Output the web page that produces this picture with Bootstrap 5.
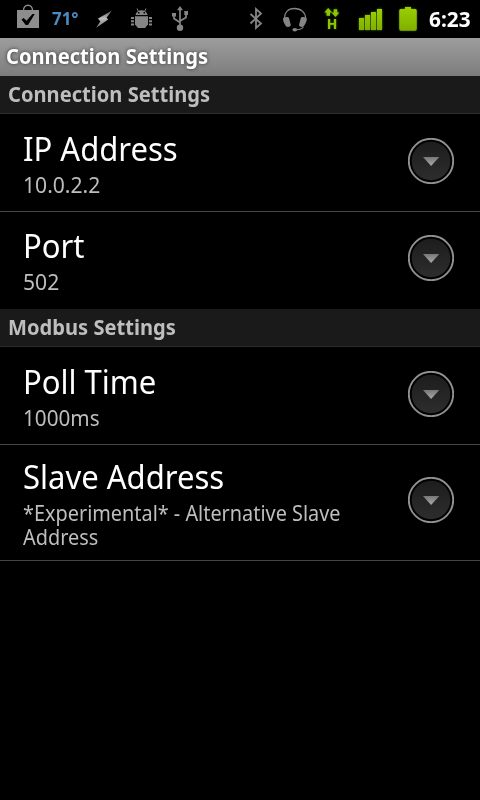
<!DOCTYPE html>
<html lang="en">
<head>
<meta charset="utf-8">
<meta name="viewport" content="width=device-width, initial-scale=1">
<title>Connection Settings</title>
<link rel="stylesheet" href="https://cdn.jsdelivr.net/npm/bootstrap@5.3.0/dist/css/bootstrap.min.css">
<style>
  body { background: #000; font-family: "Noto Sans", "Open Sans", sans-serif; overflow: hidden; }
  .screen { width: 480px; height: 800px; }
  .status-bar { height: 38px; padding-right: 9px; padding-left: 15px; }
  .status-bar svg { display: block; flex: none; }
  .temp { color: #4a8cc2; font-size: 18px; font-weight: 700; line-height: 37px; width: 28px; white-space: nowrap; margin-left: 11px; margin-right: 14px; }
  .droid-icon { margin-left: 15px; }
  .usb-icon { margin-left: 15px; }
  .clock { color: #fff; font-size: 21px; font-weight: 700; line-height: 38px; width: 42px; margin-left: 11px; white-space: nowrap; }
  .narrow { display: inline-block; transform-origin: 0 50%; transform: scaleX(.94); white-space: nowrap; }
  .title-bar .narrow, .section-head .narrow { transform: scaleX(.958); }
  .clock .narrow { transform: scaleX(.99); }
  .pref-summary .narrow { transform: scaleX(.946); }
  .pref-summary .digits { transform: scaleX(1.005); }
  .pref-summary .digits-unit { transform: scaleX(.985); }
  .title-bar { height: 38px; padding-left: 6px; font-size: 21px; line-height: 37px; font-weight: 700; color: #fff; background: linear-gradient(#9d9d9d, #7d7d7d); text-shadow: 0 0 4px #333; }
  .section-head { height: 38px; padding-left: 8px; font-size: 21px; line-height: 36px; font-weight: 700; color: #bebebe; background: #1a1a1a; border-bottom: 1px solid #2d2d2d; }
  .pref { height: 97px; padding: 15px 26px 0 23px; }
  .pref.ruled { height: 98px; padding-top: 16px; border-bottom: 1px solid #444; }
  .pref.ruled.tall { height: 116px; padding-top: 13px; }
  .pref-title { font-size: 33px; line-height: 38px; color: #fff; }
  .pref-summary { font-size: 21px; line-height: 24px; color: #bebebe; margin-top: 5px; }
  .more { width: 46px; height: 46px; margin-top: 8px; flex: none; }
  .tall .more { margin-top: 19px; }
</style>
<script src="https://cdn.jsdelivr.net/npm/bootstrap@5.3.0/dist/js/bootstrap.bundle.min.js"></script>
</head>
<body>
<svg width="0" height="0" class="position-absolute" aria-hidden="true">
  <defs>
    <linearGradient id="disc" x2="0" y2="1"><stop stop-color="#1d1d1d"/><stop offset="1" stop-color="#2d2d2d"/></linearGradient>
    <linearGradient id="arrow" x2="0" y2="1"><stop stop-color="#777"/><stop offset="1" stop-color="#aaa"/></linearGradient>
    <linearGradient id="green" x2="0" y2="1"><stop stop-color="#9bd000"/><stop offset="1" stop-color="#7fb000"/></linearGradient>
    <linearGradient id="bolt" x2="0" y2="1"><stop stop-color="#555"/><stop offset=".45" stop-color="#bbb"/><stop offset="1" stop-color="#777"/></linearGradient>
    <filter id="glow" x="-30%" y="-30%" width="160%" height="160%"><feGaussianBlur stdDeviation="1.3"/></filter>
    <symbol id="more" viewBox="0 0 46 46">
      <circle cx="23" cy="23" r="22.2" fill="#000" stroke="#919191" stroke-width="1.9"/>
      <circle cx="23" cy="23" r="19.3" fill="url(#disc)"/>
      <path d="M15 19h16.3L23.1 28z" fill="url(#arrow)"/>
    </symbol>
  </defs>
</svg>
<div class="screen d-flex flex-column">
  <header class="status-bar d-flex">
    <svg width="26" height="38" viewBox="15 0 26 38"><path d="M23.500 10.500C23.500 3.500 32.500 3.500 32.500 10.500" fill="none" stroke="#8d8d8d" stroke-width="1.4"/><path d="M17 10h22v18H17z" fill="#8d8d8d"/><path d="M21.500 19.500l2.200-1.500 2.800 2.800 6-6.800h2.300L28 25h-2.300z" fill="#000"/></svg>
    <div class="temp"><span class="narrow">71°</span></div>
    <svg width="20" height="38" viewBox="94 0 20 38"><path d="M112 10.500l-5.500 7.300 1.600 1.600L96 28l4.300-6.500-2.300-3z" fill="url(#bolt)"/></svg>
    <svg class="droid-icon" width="26" height="38" viewBox="129 0 26 38"><g fill="#858585"><path d="M135.500 15c.5-3 3-4.700 6-4.700s5.500 1.700 6 4.700z"/><path d="M138.500 11.500L137 8.500M144.500 11.500L146 8.500" stroke="#858585"/><path d="M135 16.300h13v8l-3 3.700h-7l-3-3.700z"/><path d="M131 17h3v2h-3zM131 20.300h3v2h-3zM131 23.500h3v2h-3zM149 17h3v2h-3zM149 20.300h3v2h-3zM149 23.500h3v2h-3z"/><path d="M138 12h1.500v1.500H138zM143.500 12h1.500v1.500h-1.500z" fill="#000"/></g></svg>
    <svg class="usb-icon" width="20" height="38" viewBox="170 0 20 38"><g fill="#858585"><path d="M180 6l3 4.200h-6z"/><circle cx="180" cy="27.800" r="3.200"/><path d="M172 13h4v3.500h-4zM184.300 11h3.700v4h-3.700z"/><path d="M180 9v18M174 15v3.500l6 4M186 13v4.500l-6 3.500" fill="none" stroke="#858585" stroke-width="1.700"/></g></svg>
    <div class="ms-auto d-flex">
      <svg width="170" height="38" viewBox="248 0 170 38">
        <path d="M250.500 14l10.500 9.500-5 4.500V9l5 4.500-10.500 10" fill="none" stroke="#858585" stroke-width="1.800"/>
        <path d="M284.500 21v-3c0-5 3-9.500 10-9.500s11 4.500 11 9.500v3" fill="none" stroke="#858585" stroke-width="1.300"/>
        <path d="M283 18.500c0-1.500 5.500-2.500 6-.5l1.800 7c0 2-3.800 2.500-4.800 1.200-1.500-2-3-4.700-3-7.700zM306.800 18.500c0-1.500-5.500-2.500-6-.5l-1.800 7c0 2 3.800 2.500 4.800 1.200 1.500-2 3-4.700 3-7.700z" fill="#858585"/>
        <path d="M303.500 27c-1.500 2-4 2.700-7 2.700" fill="none" stroke="#858585" stroke-width="1.100"/><ellipse cx="294.800" cy="29.700" rx="2.400" ry="1.700" fill="#858585"/>
        <g id="data" fill="#8cc800"><path d="M328.200 8l4 4.500h-2.200v3.300h-3.500v-3.300h-2.200zM335.500 17l-4-4.500h2.200V9.200h3.500v3.300h2.200z"/><path d="M328 19h2.200v4h3.700v-4h2.200v10h-2.200v-4.200h-3.700V29H328z"/></g>
        <use href="#data" filter="url(#glow)" opacity=".5"/>
        <g id="bars"><path d="M359 18h5v12h-5zM365 15h5v15h-5zM371 12h5v18h-5zM377 9h5v21h-5z"/></g>
        <use href="#bars" fill="#76a800" filter="url(#glow)" opacity=".8"/><use href="#bars" fill="url(#green)"/>
        <path id="batt" d="M405 7h6v2h4q1.500 0 1.500 1.500v18.500q0 1.500-1.500 1.500h-14q-1.500 0-1.500-1.500V10.500q0-1.500 1.500-1.500h4z" fill="url(#green)"/>
        <use href="#batt" filter="url(#glow)" opacity=".6"/><use href="#batt"/>
      </svg>
      <div class="clock"><span class="narrow">6:23</span></div>
    </div>
  </header>
  <div class="title-bar"><span class="narrow">Connection Settings</span></div>
  <main>
    <div class="section-head"><span class="narrow">Connection Settings</span></div>
    <div class="pref ruled d-flex justify-content-between">
      <div><div class="pref-title"><span class="narrow">IP Address</span></div><div class="pref-summary"><span class="narrow digits">10.0.2.2</span></div></div>
      <svg class="more"><use href="#more"/></svg>
    </div>
    <div class="pref d-flex justify-content-between">
      <div><div class="pref-title"><span class="narrow">Port</span></div><div class="pref-summary"><span class="narrow digits">502</span></div></div>
      <svg class="more"><use href="#more"/></svg>
    </div>
    <div class="section-head"><span class="narrow">Modbus Settings</span></div>
    <div class="pref ruled d-flex justify-content-between">
      <div><div class="pref-title"><span class="narrow">Poll Time</span></div><div class="pref-summary"><span class="narrow digits-unit">1000ms</span></div></div>
      <svg class="more"><use href="#more"/></svg>
    </div>
    <div class="pref ruled tall d-flex justify-content-between">
      <div><div class="pref-title"><span class="narrow">Slave Address</span></div><div class="pref-summary"><span class="narrow">*Experimental* - Alternative Slave<br>Address</span></div></div>
      <svg class="more"><use href="#more"/></svg>
    </div>
  </main>
</div>
</body>
</html>
